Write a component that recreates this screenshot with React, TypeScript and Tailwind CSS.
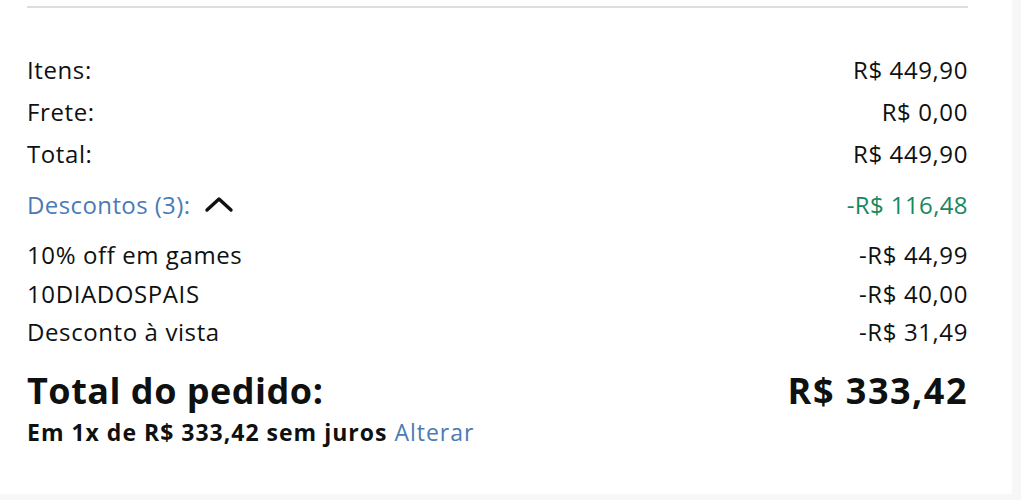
import React from 'react'

const rows = [
  { label: 'Itens:', value: 'R$ 449,90' },
  { label: 'Frete:', value: 'R$ 0,00' },
  { label: 'Total:', value: 'R$ 449,90' },
]

const discounts = [
  { label: '10% off em games', value: '-R$ 44,99' },
  { label: '10DIADOSPAIS', value: '-R$ 40,00' },
  { label: 'Desconto à vista', value: '-R$ 31,49' },
]

export default function App() {
  return (
    <div className="w-[1021px] h-[500px] bg-[#f7f7f7] font-['Open_Sans',sans-serif] text-[#0f1111]">
      <div className="w-[1012px] h-[494px] bg-white pl-[27px] pr-[44px] pt-[6px]">
        <div className="h-[2px] bg-[#dddddd]" />

        <div className="flex flex-col mt-[41px]">
          {rows.map((r) => (
            <div key={r.label} className="flex justify-between items-center h-[42px] text-[24px] tracking-[0.6px]">
              <span>{r.label}</span>
              <span>{r.value}</span>
            </div>
          ))}
        </div>

        <div className="flex justify-between items-center h-[42px] mt-[9px] text-[24px] tracking-[0.4px]">
          <div className="flex items-center gap-[14px]">
            <span className="text-[#4b7bb5]">Descontos (3):</span>
            <svg width="30" height="18" viewBox="0 0 30 18" fill="none">
              <path d="M3 14 L15 3 L27 14" stroke="#111" strokeWidth="3.4" strokeLinecap="round" strokeLinejoin="round" />
            </svg>
          </div>
          <span className="text-[#19875f]">-R$ 116,48</span>
        </div>

        <div className="flex flex-col mt-[10px]">
          {discounts.map((d) => (
            <div key={d.label} className="flex justify-between items-center h-[38.5px] text-[24px] tracking-[0.6px]">
              <span>{d.label}</span>
              <span>{d.value}</span>
            </div>
          ))}
        </div>

        <div className="flex justify-between items-center h-[40px] mt-[19px] text-[36px] font-bold">
          <span className="tracking-[0.5px]">Total do pedido:</span>
          <span className="tracking-[1.5px]">R$ 333,42</span>
        </div>
        <div className="mt-[6px] text-[23px] font-bold leading-[30px] tracking-[1px]">
          Em 1x de R$ 333,42 sem juros{' '}
          <span className="font-normal text-[#4b7bb5]">Alterar</span>
        </div>
      </div>
    </div>
  )
}
